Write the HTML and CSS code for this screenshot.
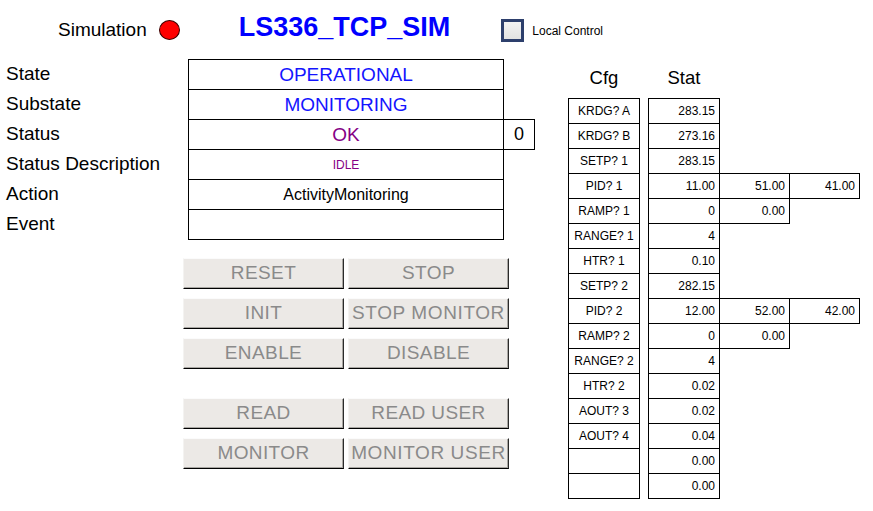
FILE: index.html
```html
<!DOCTYPE html>
<html>
<head>
<meta charset="utf-8">
<link rel="stylesheet" href="styles.css">
</head>
<body>
<div class="page">
  <div class="header">
    <span class="sim-label">Simulation</span>
    <span class="dot"></span>
    <span class="title">LS336_TCP_SIM</span>
    <span class="checkbox"></span>
    <span class="local">Local Control</span>
  </div>
  <div class="main">
    <div class="left">
      <div class="status">
        <div class="labels">
          <div class="label">State</div>
          <div class="label">Substate</div>
          <div class="label">Status</div>
          <div class="label">Status Description</div>
          <div class="label">Action</div>
          <div class="label">Event</div>
        </div>
        <div class="values">
          <div class="val blue">OPERATIONAL</div>
          <div class="val blue">MONITORING</div>
          <div class="val purple">OK</div>
          <div class="val purple small">IDLE</div>
          <div class="val black mid">ActivityMonitoring</div>
          <div class="val"></div>
        </div>
        <div class="code-col">
          <div class="code">0</div>
        </div>
      </div>
      <div class="buttons">
        <div class="btn-group">
          <div class="btn">RESET</div>
          <div class="btn">STOP</div>
          <div class="btn">INIT</div>
          <div class="btn wide">STOP MONITOR</div>
          <div class="btn">ENABLE</div>
          <div class="btn">DISABLE</div>
        </div>
        <div class="btn-group">
          <div class="btn">READ</div>
          <div class="btn">READ USER</div>
          <div class="btn">MONITOR</div>
          <div class="btn wide">MONITOR USER</div>
        </div>
      </div>
    </div>
    <div class="right">
      <div class="thead">
        <div class="th cfg-w">Cfg</div>
        <div class="th stat-w">Stat</div>
      </div>
      <div class="table">
        <div class="row first"><div class="cfg">KRDG? A</div><div class="stat">283.15</div></div>
        <div class="row"><div class="cfg">KRDG? B</div><div class="stat">273.16</div></div>
        <div class="row"><div class="cfg">SETP? 1</div><div class="stat">283.15</div></div>
        <div class="row"><div class="cfg">PID? 1</div><div class="stat">11.00</div><div class="extra top">51.00</div><div class="extra top">41.00</div></div>
        <div class="row"><div class="cfg">RAMP? 1</div><div class="stat">0</div><div class="extra">0.00</div></div>
        <div class="row"><div class="cfg">RANGE? 1</div><div class="stat">4</div></div>
        <div class="row"><div class="cfg">HTR? 1</div><div class="stat">0.10</div></div>
        <div class="row"><div class="cfg">SETP? 2</div><div class="stat">282.15</div></div>
        <div class="row"><div class="cfg">PID? 2</div><div class="stat">12.00</div><div class="extra top">52.00</div><div class="extra top">42.00</div></div>
        <div class="row"><div class="cfg">RAMP? 2</div><div class="stat">0</div><div class="extra">0.00</div></div>
        <div class="row"><div class="cfg">RANGE? 2</div><div class="stat">4</div></div>
        <div class="row"><div class="cfg">HTR? 2</div><div class="stat">0.02</div></div>
        <div class="row"><div class="cfg">AOUT? 3</div><div class="stat">0.02</div></div>
        <div class="row"><div class="cfg">AOUT? 4</div><div class="stat">0.04</div></div>
        <div class="row"><div class="cfg"></div><div class="stat">0.00</div></div>
        <div class="row"><div class="cfg"></div><div class="stat">0.00</div></div>
      </div>
    </div>
  </div>
</div>
</body>
</html>
```

FILE: styles.css
```css
* { box-sizing: border-box; }
html, body { margin: 0; padding: 0; background: #ffffff; }
body {
  font-family: "Liberation Sans", Arial, sans-serif;
  color: #000;
  width: 873px;
  height: 511px;
  overflow: hidden;
}
.page { width: 873px; height: 511px; }

.header {
  display: flex;
  align-items: center;
  height: 59px;
  padding-left: 58px;
}
.sim-label { font-size: 19px; margin-right: 12px; }
.dot {
  width: 21px; height: 20px;
  border-radius: 50%;
  background: #ff0000;
  border: 1px solid #3a0000;
  margin-right: 59px;
}
.title {
  font-size: 27px;
  font-weight: bold;
  color: #0000ff;
  margin-right: 51px;
  margin-bottom: 4px;
}
.checkbox {
  width: 23px; height: 23px;
  border: 3px solid #2d3f6c;
  background: linear-gradient(#f2f2f2, #e2e2e2);
  margin-right: 8px;
  margin-top: 2px;
}
.local { font-size: 12px; margin-top: 2px; }

.main { display: flex; }
.left { width: 568px; }

.status { display: flex; padding-left: 6px; }
.labels { width: 182px; }
.label { height: 30px; line-height: 30px; font-size: 19px; }
.values { width: 316px; border-top: 1px solid #000; }
.val {
  height: 30px;
  border: 1px solid #000;
  border-top: none;
  display: flex;
  align-items: center;
  justify-content: center;
  font-size: 19px;
}
.blue { color: #1414ff; }
.purple { color: #850085; }
.small { font-size: 12px; }
.mid { font-size: 16px; }
.code-col { padding-top: 60px; }
.code {
  width: 31px; height: 31px;
  border: 1px solid #000;
  border-left: none;
  display: flex;
  align-items: center;
  justify-content: center;
  font-size: 18px;
}

.buttons {
  display: flex;
  flex-direction: column;
  gap: 29px;
  margin-left: 183px;
  margin-top: 18px;
}
.btn-group {
  display: grid;
  grid-template-columns: 161px 161px;
  grid-auto-rows: 31px;
  column-gap: 4px;
  row-gap: 9px;
}
.btn {
  background: #ece9e6;
  border-top: 1px solid #fbfbfb;
  border-left: 1px solid #f4f3f1;
  border-right: 1px solid #2a2a2a;
  border-bottom: 1px solid #000;
  box-shadow: inset -1px -1px 0 #a8a6a2;
  color: #8a8a8a;
  font-size: 19px;
  letter-spacing: 0.4px;
  display: flex;
  align-items: center;
  justify-content: center;
  padding-bottom: 2px;
  white-space: nowrap;
  overflow: hidden;
}
.wide { letter-spacing: 0.6px; }

.right { display: flex; flex-direction: column; }
.thead { display: flex; height: 40px; }
.th {
  font-size: 18.5px;
  text-align: center;
  line-height: 38px;
}
.cfg-w { width: 72px; margin-right: 8px; }
.stat-w { width: 72px; }

.row { display: flex; height: 25px; }
.cfg, .stat, .extra {
  height: 25px;
  font-size: 12px;
  display: flex;
  align-items: center;
  border-bottom: 1px solid #000;
}
.cfg {
  width: 72px;
  margin-right: 8px;
  justify-content: center;
  border-left: 1px solid #000;
  border-right: 1px solid #000;
}
.stat {
  width: 72px;
  justify-content: flex-end;
  padding-right: 4px;
  border-left: 1px solid #000;
  border-right: 1px solid #000;
}
.extra {
  width: 70px;
  justify-content: flex-end;
  padding-right: 4px;
  border-right: 1px solid #000;
}
.extra.top { box-shadow: 0 -1px 0 #000; }
.row.first .cfg, .row.first .stat { border-top: 1px solid #000; height: 26px; }
.row.first { height: 26px; }
.table { margin-top: -1px; }
```
